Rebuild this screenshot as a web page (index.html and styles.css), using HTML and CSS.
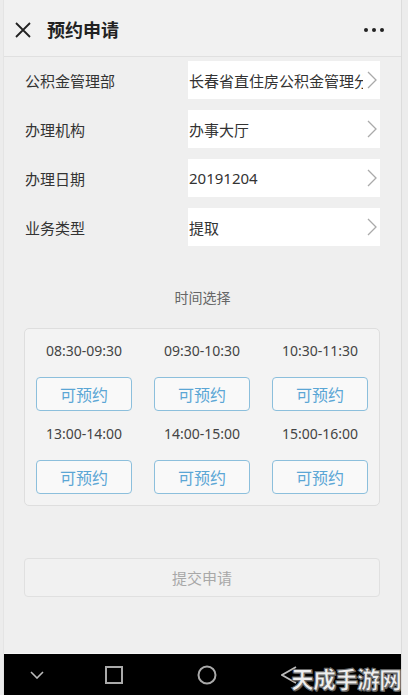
FILE: index.html
```html
<!DOCTYPE html>
<html lang="zh-CN">
<head>
    <meta charset="UTF-8">
    <meta name="viewport" content="width=device-width, initial-scale=1.0">
    <title>预约申请</title>
    <link rel="stylesheet" href="styles.css">
</head>
<body>
    <div class="app">
        <div class="topbar">
            <svg class="close" width="16" height="16" viewBox="0 0 16 16"><path d="M1 1L15 15M15 1L1 15" stroke="#222" stroke-width="1.8" fill="none"/></svg>
            <span class="title">预约申请</span>
            <span class="more"><i></i><i></i><i></i></span>
        </div>

        <div class="form">
            <div class="row">
                <span class="label">公积金管理部</span>
                <div class="field"><span class="value">长春省直住房公积金管理分中心</span><svg class="arrow" width="10" height="18" viewBox="0 0 10 18"><path d="M1 1L9 9L1 17" stroke="#aaa" stroke-width="1.3" fill="none"/></svg></div>
            </div>
            <div class="row">
                <span class="label">办理机构</span>
                <div class="field"><span class="value">办事大厅</span><svg class="arrow" width="10" height="18" viewBox="0 0 10 18"><path d="M1 1L9 9L1 17" stroke="#aaa" stroke-width="1.3" fill="none"/></svg></div>
            </div>
            <div class="row">
                <span class="label">办理日期</span>
                <div class="field"><span class="value">20191204</span><svg class="arrow" width="10" height="18" viewBox="0 0 10 18"><path d="M1 1L9 9L1 17" stroke="#aaa" stroke-width="1.3" fill="none"/></svg></div>
            </div>
            <div class="row">
                <span class="label">业务类型</span>
                <div class="field"><span class="value">提取</span><svg class="arrow" width="10" height="18" viewBox="0 0 10 18"><path d="M1 1L9 9L1 17" stroke="#aaa" stroke-width="1.3" fill="none"/></svg></div>
            </div>
        </div>

        <div class="section-title">时间选择</div>
        <div class="slots">
            <div class="slot"><span class="time">08:30-09:30</span><button>可预约</button></div>
            <div class="slot"><span class="time">09:30-10:30</span><button>可预约</button></div>
            <div class="slot"><span class="time">10:30-11:30</span><button>可预约</button></div>
            <div class="slot"><span class="time">13:00-14:00</span><button>可预约</button></div>
            <div class="slot"><span class="time">14:00-15:00</span><button>可预约</button></div>
            <div class="slot"><span class="time">15:00-16:00</span><button>可预约</button></div>
        </div>

        <div class="submit">提交申请</div>

        <div class="navbar">
            <svg class="nav-down" width="14" height="8" viewBox="0 0 14 8"><path d="M1 1L7 7L13 1" stroke="#bbb" stroke-width="1.6" fill="none"/></svg>
            <svg class="nav-square" width="18" height="18" viewBox="0 0 18 18"><rect x="1" y="1" width="16" height="16" stroke="#aaa" stroke-width="2" fill="none"/></svg>
            <svg class="nav-circle" width="20" height="20" viewBox="0 0 20 20"><circle cx="10" cy="10" r="8.5" stroke="#aaa" stroke-width="2" fill="none"/></svg>
            <svg class="nav-back" width="16" height="18" viewBox="0 0 16 18"><path d="M15 1L1 9L15 17" stroke="#bbb" stroke-width="1.8" fill="none"/></svg>
            <span class="watermark">天成手游网</span>
        </div>
    </div>
</body>
</html>
```

FILE: styles.css
```css
body { margin: 0; background: #ececec; font-family: "Noto Sans", "Noto Sans CJK SC", sans-serif; color: #333; }
.app { width: 397px; height: 695px; margin-left: 3px; background: #efefef; border-left: 1px solid #e4e4e4; border-right: 1px solid #dcdcdc; display: flex; flex-direction: column; position: relative; overflow: hidden; }

.topbar { height: 56px; flex-shrink: 0; display: flex; align-items: center; border-bottom: 1px solid #e0e0e0; background: #f1f1f1; }
.close { margin-left: 11px; margin-top: 3px; }
.title { margin-left: 16px; font-size: 18px; font-weight: 700; color: #222; margin-top: 2px; }
.more { margin-left: auto; margin-right: 17px; display: flex; gap: 4px; margin-top: 3px; }
.more i { width: 4px; height: 4px; border-radius: 50%; background: #222; }

.form { padding-top: 4px; }
.row { display: flex; align-items: center; height: 38px; margin-bottom: 11px; }
.label { width: 184px; padding-left: 21px; font-size: 15px; color: #333; box-sizing: border-box; flex-shrink: 0; }
.field { width: 192px; height: 38px; background: #fff; display: flex; align-items: center; }
.value { flex: 1; padding-left: 1px; font-size: 15px; color: #333; white-space: nowrap; overflow: hidden; }
.arrow { margin: 0 3px 0 4px; flex-shrink: 0; }

.section-title { margin-top: 31px; line-height: 20px; text-align: center; font-size: 14px; color: #666; }
.slots { margin: 20px 0 0 20px; width: 356px; height: 178px; box-sizing: border-box; border: 1px solid #dedede; border-radius: 5px; background: #f3f3f3; padding: 12px 0 0 11px; display: grid; grid-template-columns: repeat(3, 96px); column-gap: 22px; row-gap: 13px; align-content: start; }
.slot { display: flex; flex-direction: column; align-items: center; }
.time { line-height: 20px; font-size: 14px; color: #444; margin-bottom: 16px; }
.slot button { width: 96px; height: 34px; border: 1px solid #8cbfdc; border-radius: 4px; background: #f9f9f9; color: #5ba6d5; font-size: 16px; font-family: inherit; padding: 0; }

.submit { margin: 52px 0 0 20px; width: 356px; height: 39px; box-sizing: border-box; border: 1px solid #e0e0e0; border-radius: 4px; display: flex; align-items: center; justify-content: center; font-size: 15px; color: #a8a8a8; background: #f1f1f1; }

.navbar { margin-top: auto; height: 41px; background: #000; border-top: 1px solid #f6f6f6; display: flex; align-items: center; position: relative; }
.nav-down { margin-left: 26px; }
.nav-square { margin-left: 61px; }
.nav-circle { margin-left: 74px; }
.nav-back { margin-left: 64px; }
.watermark { position: absolute; right: 0; top: 7px; font-size: 23px; font-weight: 900; color: #eee; letter-spacing: -1px; -webkit-text-stroke: 1px #666; text-shadow: 1px 1px 0 #555; }
```
